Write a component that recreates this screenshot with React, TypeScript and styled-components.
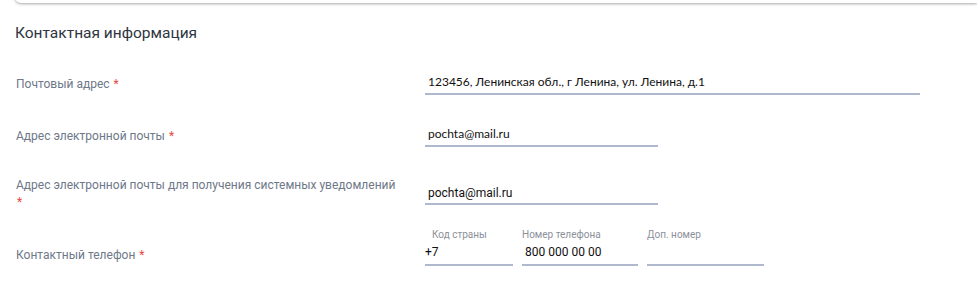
import React from "react";
import styled, { createGlobalStyle } from "styled-components";

const GlobalStyle = createGlobalStyle`
  html, body { margin: 0; padding: 0; background: #ffffff; }
  body { font-family: Roboto, "Noto Sans", Arial, sans-serif; overflow: hidden; }
  * { box-sizing: border-box; }
`;

const Page = styled.div`
  width: 977px;
  height: 296px;
  background: #ffffff;
  overflow: hidden;
`;

const TopCard = styled.div`
  margin: -20px 0 0 15px;
  height: 23px;
  background: #ffffff;
  border-bottom-left-radius: 6px;
  box-shadow: 0 1px 3px rgba(0, 0, 0, 0.35);
`;

const Section = styled.section`
  padding: 0 0 0 16px;
  display: flex;
  flex-direction: column;
`;

const Title = styled.h2`
  margin: 20px 0 30px -1px;
  font-size: 15.5px;
  line-height: 20px;
  font-weight: 400;
  color: #2f3541;
`;

const Rows = styled.div`
  display: flex;
  flex-direction: column;
  gap: 30px;
`;

const Row = styled.div<{ $shift?: number }>`
  display: flex;
  align-items: center;
  margin-top: ${(p) => p.$shift ?? 0}px;
`;

const LabelCell = styled.div`
  width: 409px;
  flex: none;
`;

const Label = styled.div`
  max-width: 380px;
  font-size: 12px;
  line-height: 17px;
  color: #6e7888;
`;

const Star = styled.span`
  color: #e8473f;
  margin-left: 1px;
`;

const Fields = styled.div`
  display: flex;
  gap: 9px;
`;

const Field = styled.label<{ $w: number }>`
  position: relative;
  display: block;
  width: ${(p) => p.$w}px;
`;

const Caption = styled.span<{ $indent?: number }>`
  position: absolute;
  left: ${(p) => p.$indent ?? 0}px;
  bottom: calc(100% + 3px);
  font-size: 10px;
  line-height: 12px;
  color: #8b909a;
  white-space: nowrap;
`;

const Input = styled.input<{ $font?: "lato" | "roboto"; $pad?: number; $top?: number }>`
  display: block;
  width: 100%;
  height: 22px;
  margin: 0;
  padding: ${(p) => p.$top ?? 0}px 0 ${(p) => 4 - (p.$top ?? 0)}px ${(p) => p.$pad ?? 3}px;
  border: none;
  border-bottom: 2px solid #afb8cc;
  border-radius: 0;
  background: transparent;
  outline: none;
  font-family: ${(p) =>
    p.$font === "roboto" ? `Roboto, "Noto Sans", sans-serif` : `Lato, "Noto Sans", sans-serif`};
  font-size: 12px;
  line-height: 16px;
  color: #111111;
`;

const RequiredLabel: React.FC<{ children: React.ReactNode }> = ({ children }) => (
  <LabelCell>
    <Label>
      {children} <Star>*</Star>
    </Label>
  </LabelCell>
);

export default function App() {
  return (
    <Page>
      <GlobalStyle />
      <TopCard />
      <Section>
        <Title>Контактная информация</Title>
        <Rows>
          <Row>
            <RequiredLabel>Почтовый адрес</RequiredLabel>
            <Field $w={495}>
              <Input readOnly value="123456, Ленинская обл., г Ленина, ул. Ленина, д.1" />
            </Field>
          </Row>
          <Row>
            <RequiredLabel>Адрес электронной почты</RequiredLabel>
            <Field $w={233}>
              <Input readOnly value="pochta@mail.ru" />
            </Field>
          </Row>
          <Row>
            <RequiredLabel>Адрес электронной почты для получения системных уведомлений</RequiredLabel>
            <Field $w={233}>
              <Input readOnly $font="roboto" $top={2} value="pochta@mail.ru" />
            </Field>
          </Row>
          <Row $shift={3}>
            <RequiredLabel>Контактный телефон</RequiredLabel>
            <Fields>
              <Field $w={88}>
                <Caption $indent={7}>Код страны</Caption>
                <Input readOnly $font="roboto" $pad={0} value="+7" />
              </Field>
              <Field $w={116}>
                <Caption>Номер телефона</Caption>
                <Input readOnly $font="roboto" value="800 000 00 00" />
              </Field>
              <Field $w={117}>
                <Caption>Доп. номер</Caption>
                <Input readOnly $font="roboto" value="" />
              </Field>
            </Fields>
          </Row>
        </Rows>
      </Section>
    </Page>
  );
}
